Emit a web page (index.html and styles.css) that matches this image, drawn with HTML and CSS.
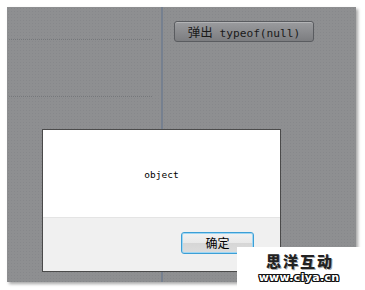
FILE: index.html
```html
<!DOCTYPE html>
<html>
<head>
<meta charset="utf-8">
<link rel="stylesheet" href="styles.css">
</head>
<body>
<div class="stage">
  <div class="left">
    <div class="dots dots-1"></div>
    <div class="dots dots-2"></div>
  </div>
  <div class="right">
    <button class="btn"><span class="cjk">弹出</span> typeof(null)</button>
  </div>
  <div class="dialog">
    <div class="dialog-body">object</div>
    <div class="dialog-foot">
      <button class="ok">确定</button>
    </div>
  </div>
</div>
<div class="mark">
  <div class="mark-cn">思洋互动</div>
  <div class="mark-en">www.ciya.cn</div>
</div>
</body>
</html>
```
FILE: styles.css
```css
html, body {
  margin: 0;
  padding: 0;
  background: #fff;
  width: 365px;
  height: 290px;
  overflow: hidden;
}
.stage {
  position: relative;
  margin: 7px 0 0 7px;
  width: 349px;
  height: 275px;
  background-color: #8e8f91;
  background-image: radial-gradient(circle, rgba(128,130,134,0.5) 0.6px, transparent 0.8px);
  background-size: 3px 3px;
  box-shadow: 2px 2px 3px rgba(0,0,0,0.35);
  display: flex;
}
.left {
  width: 154px;
  border-right: 2px solid #76808f;
  flex-shrink: 0;
}
.dots {
  margin-left: 2px;
  width: 143px;
  border-top: 1px dotted #76787b;
}
.dots-1 { margin-top: 32px; }
.dots-2 { margin-top: 56px; }
.right {
  flex: 1;
  padding: 14px 0 0 11px;
}
.btn {
  display: block;
  width: 140px;
  height: 21px;
  margin: 0;
  padding: 0;
  border: 1px solid #5a5c60;
  border-radius: 3px;
  background: linear-gradient(#9a9b9e, #8a8b8e 55%, #7c7d80);
  box-shadow: inset 0 1px 0 rgba(255,255,255,0.25);
  font-family: "DejaVu Sans Mono", "Noto Sans CJK SC", monospace;
  font-size: 11.2px;
  color: #1a1a1a;
  text-align: center;
  line-height: 19px;
}
.cjk {
  font-family: "Noto Sans CJK SC", sans-serif;
  font-size: 12.5px;
}
.dialog {
  position: absolute;
  left: 35px;
  top: 122px;
  width: 237px;
  height: 141px;
  border: 1px solid #4a4a4a;
  background: #fff;
  display: flex;
  flex-direction: column;
}
.dialog-body {
  height: 87px;
  display: flex;
  align-items: center;
  justify-content: center;
  font-family: "DejaVu Sans Mono", monospace;
  font-size: 9.5px;
  color: #000;
  padding-top: 2px;
  box-sizing: border-box;
}
.dialog-foot {
  flex: 1;
  background: #f0f0f0;
  border-top: 1px solid #e4e4e4;
  display: flex;
  justify-content: flex-end;
  align-items: flex-start;
  padding: 14px 26px 0 0;
}
.ok {
  width: 73px;
  height: 22px;
  margin: 0;
  padding: 0;
  border: 1px solid #3c9fd6;
  border-radius: 3px;
  background: linear-gradient(#f2f2f2, #e8e8e8 50%, #d6d6d6 51%, #dcdcdc);
  box-shadow: inset 0 0 0 1px #9fd6f3;
  font-family: "Noto Sans CJK SC", sans-serif;
  font-size: 12px;
  color: #000;
  line-height: 18px;
}
.mark {
  position: absolute;
  left: 237px;
  top: 247px;
  width: 128px;
  height: 43px;
  background: #fff;
  display: flex;
  flex-direction: column;
  align-items: center;
  padding-top: 6px;
  box-sizing: border-box;
}
.mark-cn {
  font-family: "Noto Sans CJK SC", sans-serif;
  font-weight: 900;
  font-size: 15px;
  line-height: 15px;
  height: 15px;
  letter-spacing: 2px;
  color: #222;
  text-shadow: 1px 1px 0 #aaa;
  margin: 0 0 4px -2px;
}
.mark-en {
  font-family: "DejaVu Sans", Verdana, sans-serif;
  font-weight: bold;
  font-size: 11px;
  line-height: 11px;
  color: #fff;
  letter-spacing: 0.3px;
  text-shadow: 1px 0 0 #111, -1px 0 0 #111, 0 1px 0 #111, 0 -1px 0 #111, 1px 1px 0 #111, -1px -1px 0 #111, 1px -1px 0 #111, -1px 1px 0 #111;
  margin-left: -4px;
}
```
